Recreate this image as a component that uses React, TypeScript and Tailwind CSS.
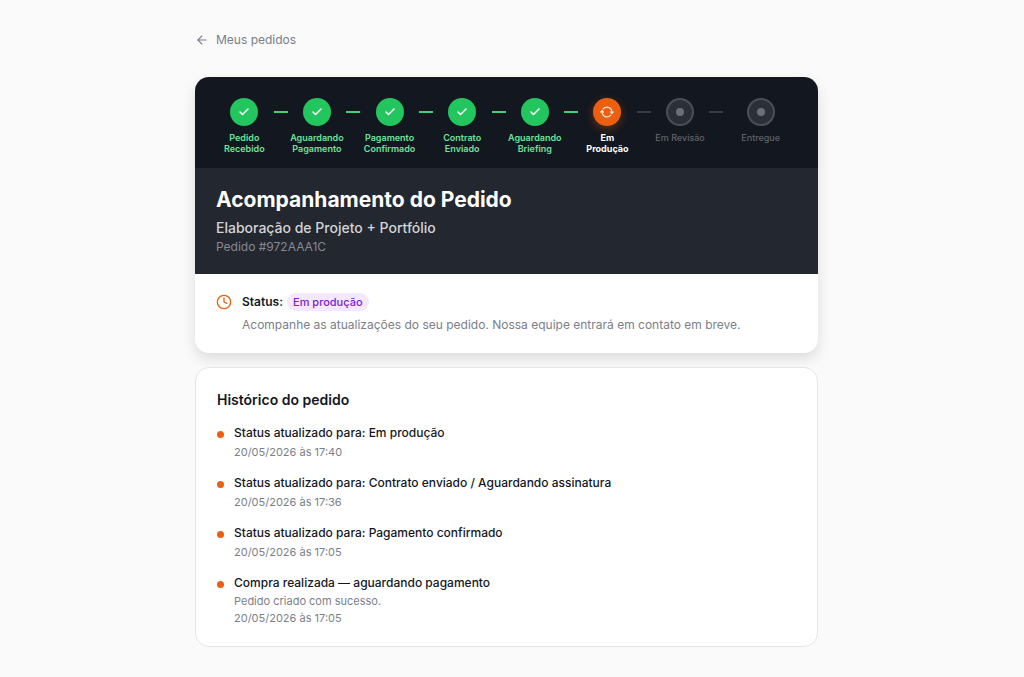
import React from 'react';
import { ArrowLeft, Check, Clock } from 'lucide-react';
import { IoSyncOutline } from 'react-icons/io5';

type StepState = 'done' | 'current' | 'pending';

interface Step {
  lines: string[];
  state: StepState;
}

interface HistoryEntry {
  title: string;
  description?: string;
  date: string;
}

const steps: Step[] = [
  { lines: ['Pedido', 'Recebido'], state: 'done' },
  { lines: ['Aguardando', 'Pagamento'], state: 'done' },
  { lines: ['Pagamento', 'Confirmado'], state: 'done' },
  { lines: ['Contrato', 'Enviado'], state: 'done' },
  { lines: ['Aguardando', 'Briefing'], state: 'done' },
  { lines: ['Em', 'Produção'], state: 'current' },
  { lines: ['Em Revisão'], state: 'pending' },
  { lines: ['Entregue'], state: 'pending' },
];

const history: HistoryEntry[] = [
  { title: 'Status atualizado para: Em produção', date: '20/05/2026 às 17:40' },
  { title: 'Status atualizado para: Contrato enviado / Aguardando assinatura', date: '20/05/2026 às 17:36' },
  { title: 'Status atualizado para: Pagamento confirmado', date: '20/05/2026 às 17:05' },
  { title: 'Compra realizada — aguardando pagamento', description: 'Pedido criado com sucesso.', date: '20/05/2026 às 17:05' },
];

const circleStyles: Record<StepState, string> = {
  done: 'bg-[#22c55e] text-white',
  current: 'bg-[#ea6010] text-white/80 shadow-[0_3px_10px_rgba(234,96,16,0.35)]',
  pending: 'bg-[#2b2f38] border-2 border-[#4b4f58]',
};

const labelStyles: Record<StepState, string> = {
  done: 'font-semibold text-[#6fe39a]',
  current: 'font-bold text-white',
  pending: 'font-medium text-[#5f636b]',
};

const StepItem: React.FC<{ step: Step; isLast: boolean }> = ({ step, isLast }) => (
  <li className="flex flex-1 items-start">
    <div className="flex min-w-0 flex-1 flex-col items-center">
      <div className={`flex size-7 items-center justify-center rounded-full ${circleStyles[step.state]}`}>
        {step.state === 'done' && <Check className="size-3" strokeWidth={3} />}
        {step.state === 'current' && <IoSyncOutline className="size-3.5 [&_path]:[stroke-width:48px]" />}
        {step.state === 'pending' && <span className="size-2 rounded-full bg-[#6b6f77]" />}
      </div>
      <span className={`mt-1.5 text-center text-[9px] leading-[11px] whitespace-nowrap ${labelStyles[step.state]}`}>
        {step.lines.map(line => <span key={line} className="block">{line}</span>)}
      </span>
    </div>
    {!isLast && <span className={`mx-px mt-[13px] h-0.5 w-3.5 shrink-0 ${step.state === 'done' ? 'bg-[#3fd174]' : 'bg-[#383c44]'}`} />}
  </li>
);

const HistoryItem: React.FC<{ entry: HistoryEntry }> = ({ entry }) => (
  <li className="flex items-start gap-2.5">
    <span className="mt-2 size-[7px] shrink-0 rounded-full bg-[#ea6010]" />
    <div>
      <p className="text-[12px] leading-5 font-medium text-[#14171f]">{entry.title}</p>
      {entry.description && <p className="text-[11px] leading-4 text-[#7b808a]">{entry.description}</p>}
      <p className="mt-px text-[11px] leading-4 text-[#7b808a]">{entry.date}</p>
    </div>
  </li>
);

const App: React.FC = () => (
  <div className="min-h-screen bg-[#fafafa] pr-[11px] font-['Inter',sans-serif]">
    <main className="mx-auto w-full max-w-[623px] py-[30px]">
      <a href="#pedidos" className="flex h-5 w-fit items-center gap-[7px] text-[12px] leading-5 text-[#787f8b]">
        <ArrowLeft className="size-3.5" />
        Meus pedidos
      </a>

      <section className="mt-[27px] overflow-hidden rounded-[14px] bg-white shadow-[0_6px_14px_rgba(0,0,0,0.12)]">
        <ol className="flex bg-[#131720] px-[21px] pt-[21px] pb-3.5">
          {steps.map((step, i) => <StepItem key={i} step={step} isLast={i === steps.length - 1} />)}
        </ol>
        <header className="bg-[#232730] px-[21px] py-[18px]">
          <h1 className="text-[21px] leading-7 font-bold text-white">Acompanhamento do Pedido</h1>
          <p className="mt-1 text-[14px] leading-5 font-medium text-[#d3d4d6]">Elaboração de Projeto + Portfólio</p>
          <p className="text-[12px] leading-[18px] text-[#868990]">Pedido #972AAA1C</p>
        </header>
        <div className="flex items-start gap-2.5 px-[21px] py-[18px]">
          <Clock className="mt-0.5 size-4 shrink-0 text-[#ea6010]" />
          <div>
            <p className="flex items-center gap-1 text-[12px] leading-5 font-semibold text-[#14171f]">
              Status:
              <span className="rounded-full bg-[#f3e8ff] px-1.5 text-[11px] leading-[18px] font-medium text-[#7e22ce]">Em produção</span>
            </p>
            <p className="mt-[3px] text-[12px] leading-5 text-[#7b808a]">Acompanhe as atualizações do seu pedido. Nossa equipe entrará em contato em breve.</p>
          </div>
        </div>
      </section>

      <section className="mt-3.5 rounded-[14px] border border-[#e4e5e9] bg-white px-[21px] pt-[21px] pb-5">
        <h2 className="text-[14px] leading-[22px] font-semibold text-[#14171f]">Histórico do pedido</h2>
        <ul className="mt-3 flex flex-col gap-[13px]">
          {history.map((entry, i) => <HistoryItem key={i} entry={entry} />)}
        </ul>
      </section>
    </main>
  </div>
);

export default App;
